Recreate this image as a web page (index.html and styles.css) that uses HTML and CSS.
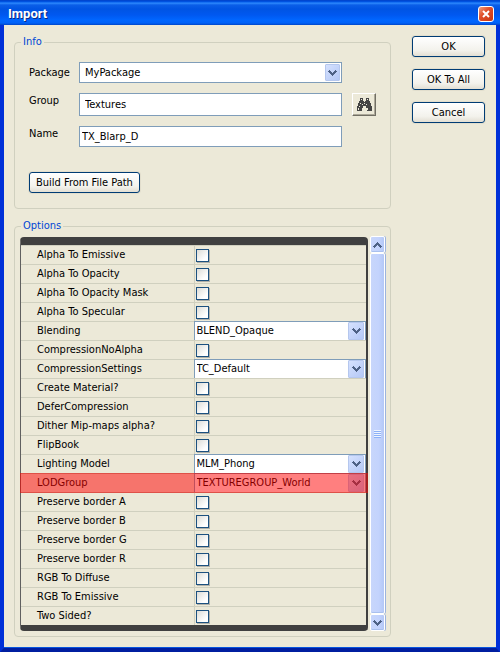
FILE: index.html
```html
<!DOCTYPE html>
<html lang="en">
<head>
<meta charset="utf-8">
<meta name="viewport" content="width=device-width, initial-scale=1">
<title>Import</title>
<link rel="stylesheet" href="styles.css">
</head>
<body>
<svg class="defs" aria-hidden="true">
  <symbol id="chevron" viewBox="0 0 9 6"><path d="M1 0h1v1h1v1h1v1h1v-1h1v-1h1v-1h1v1h1v1h-1v1h-1v1h-1v1h-1v1h-1v-1h-1v-1h-1v-1h-1v-1h-1v-1h1z"/></symbol>
</svg>
<div class="window">
  <header class="titlebar">
    <h1>Import</h1>
    <button class="close" type="button" aria-label="Close">
      <svg viewBox="0 0 8 8" width="8" height="8"><path d="M1 1L7 7M7 1L1 7" stroke="#fff" stroke-width="2"/></svg>
    </button>
  </header>
  <form class="content">
    <main class="panels">
      <fieldset class="info">
        <legend>Info</legend>
        <div class="fields">
          <label for="package">Package</label>
          <div class="combo">
            <select id="package"><option>MyPackage</option></select>
            <span class="arrow"><svg width="9" height="6"><use href="#chevron"/></svg></span>
          </div>
          <label for="group">Group</label>
          <input class="group" id="group" type="text" value="Textures">
          <button class="find" type="button" aria-label="Find">
            <svg viewBox="0 0 15 13" width="15" height="13" shape-rendering="crispEdges">
              <path fill="#444" d="M3 0h3v3h1v1h1v-1h1v-3h3v3h1v2h1v3h1v5h-5v-3h-1v-2h-3v2h-1v3h-5v-5h1v-3h1v-2h1z"/>
              <path fill="#ece9d8" d="M4 1h1v1h-1zM10 1h1v1h-1zM3 5h1v1h-1zM2 8h1v1h-1zM1 10h1v2h-1zM7 5h1v1h-1zM5 6h1v1h-1zM9 6h1v1h-1zM10 10h1v2h-1z"/>
            </svg>
          </button>
          <label for="name">Name</label>
          <input id="name" type="text" value="TX_Blarp_D">
        </div>
        <button class="button build" type="button">Build From File Path</button>
      </fieldset>
      <fieldset class="options">
        <legend>Options</legend>
        <div class="grid-area">
          <div class="property-grid">
            <table>
              <tbody>
                <tr><th><label for="o1">Alpha To Emissive</label></th><td><input id="o1" type="checkbox"></td></tr>
                <tr><th><label for="o2">Alpha To Opacity</label></th><td><input id="o2" type="checkbox"></td></tr>
                <tr><th><label for="o3">Alpha To Opacity Mask</label></th><td><input id="o3" type="checkbox"></td></tr>
                <tr><th><label for="o4">Alpha To Specular</label></th><td><input id="o4" type="checkbox"></td></tr>
                <tr class="choice"><th><label for="o5">Blending</label></th><td><div class="combo"><select id="o5"><option>BLEND_Opaque</option></select><span class="arrow"><svg width="9" height="6"><use href="#chevron"/></svg></span></div></td></tr>
                <tr><th><label for="o6">CompressionNoAlpha</label></th><td><input id="o6" type="checkbox"></td></tr>
                <tr class="choice"><th><label for="o7">CompressionSettings</label></th><td><div class="combo"><select id="o7"><option>TC_Default</option></select><span class="arrow"><svg width="9" height="6"><use href="#chevron"/></svg></span></div></td></tr>
                <tr><th><label for="o8">Create Material?</label></th><td><input id="o8" type="checkbox"></td></tr>
                <tr><th><label for="o9">DeferCompression</label></th><td><input id="o9" type="checkbox"></td></tr>
                <tr><th><label for="o10">Dither Mip-maps alpha?</label></th><td><input id="o10" type="checkbox"></td></tr>
                <tr><th><label for="o11">FlipBook</label></th><td><input id="o11" type="checkbox"></td></tr>
                <tr class="choice"><th><label for="o12">Lighting Model</label></th><td><div class="combo"><select id="o12"><option>MLM_Phong</option></select><span class="arrow"><svg width="9" height="6"><use href="#chevron"/></svg></span></div></td></tr>
                <tr class="choice marked"><th><label for="o13">LODGroup</label></th><td><div class="combo"><select id="o13"><option>TEXTUREGROUP_World</option></select><span class="arrow"><svg width="9" height="6"><use href="#chevron"/></svg></span></div></td></tr>
                <tr><th><label for="o14">Preserve border A</label></th><td><input id="o14" type="checkbox"></td></tr>
                <tr><th><label for="o15">Preserve border B</label></th><td><input id="o15" type="checkbox"></td></tr>
                <tr><th><label for="o16">Preserve border G</label></th><td><input id="o16" type="checkbox"></td></tr>
                <tr><th><label for="o17">Preserve border R</label></th><td><input id="o17" type="checkbox"></td></tr>
                <tr><th><label for="o18">RGB To Diffuse</label></th><td><input id="o18" type="checkbox"></td></tr>
                <tr><th><label for="o19">RGB To Emissive</label></th><td><input id="o19" type="checkbox"></td></tr>
                <tr><th><label for="o20">Two Sided?</label></th><td><input id="o20" type="checkbox"></td></tr>
              </tbody>
            </table>
          </div>
          <div class="scrollbar">
            <button type="button" aria-label="Scroll up"><svg class="up" width="9" height="6"><use href="#chevron"/></svg></button>
            <div class="thumb"><span class="grip"></span></div>
            <button type="button" aria-label="Scroll down"><svg width="9" height="6"><use href="#chevron"/></svg></button>
          </div>
        </div>
      </fieldset>
    </main>
    <div class="actions">
      <button class="button" type="button">OK</button>
      <button class="button" type="button">OK To All</button>
      <button class="button" type="button">Cancel</button>
    </div>
  </form>
</div>
</body>
</html>
```
FILE: styles.css
```css
* { box-sizing: border-box; }

body {
  margin: 0;
  background: #0831d9;
  font-family: Tahoma, "DejaVu Sans Condensed", sans-serif;
  font-size: 11px;
  line-height: 14px;
  color: #000;
}

button, input, select { font: inherit; color: inherit; margin: 0; }
.defs { position: absolute; width: 0; height: 0; }
svg { display: block; fill: #4d6185; }

.window {
  display: flex;
  flex-direction: column;
  min-height: 100vh;
  border: solid;
  border-width: 0 4px 4px;
  border-color: #0a48e6 #0030d8 #001ea0 #0030d8;
  background: #ece9d8;
  box-shadow: inset 0 -1px #0855dd;
}

.titlebar {
  display: flex;
  align-items: center;
  justify-content: space-between;
  height: 25px;
  margin: 0 -4px;
  padding: 3px 6px 0 8px;
  background: linear-gradient(#0040c8 0, #0058e8 2px, #2f8cff 3px, #0a5ee8 5px, #0054e3 9px, #0058f0 15px, #0066ff 20px, #0062f8 23px, #0045c8 25px);
}

.titlebar h1 {
  margin: 0;
  color: #fff;
  font: bold 13px/16px Roboto, sans-serif;
  text-shadow: 1px 1px #0a2a80;
}

.close {
  display: grid;
  place-items: center;
  width: 16px;
  height: 16px;
  padding: 0;
  border: 1px solid #fff;
  border-radius: 3px;
  background: linear-gradient(135deg, #f0a080, #e0502c 40%, #c83410);
}

.content {
  display: flex;
  flex: 1;
  gap: 21px;
  padding: 10px 11px 10px 10px;
}

.panels {
  display: flex;
  flex: 1;
  flex-direction: column;
  gap: 10px;
  min-width: 0;
}

fieldset {
  min-width: 0;
  margin: 0;
  border: 1px solid #d0d0bf;
  border-radius: 4px;
}

legend { padding: 0 2px; color: #0046d5; }
.info legend { margin-left: -8px; }
.options legend { margin-left: 1px; }

.info { padding: 13px 14px 15px; }
.options { padding: 3px 5px 5px; }

.fields {
  display: grid;
  grid-template-columns: 50px 1fr 24px;
  row-gap: 10px;
  padding-bottom: 25px;
}
.fields label { grid-column: 1; padding-top: 1px; }
.fields label[for="package"] { padding-top: 4px; }
.fields .combo, .fields > input { margin-right: 10px; }
.fields > .combo, .fields > #name { grid-column: 2; }

.fields > input {
  min-width: 0;
  height: 21px;
  padding: 0 2px;
  border: 1px solid #7f9db9;
  background: #fff;
}
.fields > .group { height: 23px; padding: 0 5px; }

.combo {
  display: grid;
  grid-template-columns: 1fr 18px;
  min-width: 0;
  height: 21px;
}
.combo select {
  grid-area: 1 / 1 / 2 / 3;
  appearance: none;
  width: 100%;
  height: 100%;
  padding: 0 18px 0 5px;
  border: 1px solid #7f9db9;
  border-radius: 0;
  background: #fff;
}
.combo .arrow {
  grid-area: 1 / 2;
  display: grid;
  place-items: center;
  margin: 2px 2px 2px 1px;
  border: 1px solid #b5c7ee;
  border-radius: 1px;
  background: linear-gradient(135deg, #d5e1fe, #b4c8f6);
  pointer-events: none;
}

.find {
  display: grid;
  place-items: center;
  width: 24px;
  height: 23px;
  padding: 0;
  border: 1px solid;
  border-color: #fff #716f64 #716f64 #fff;
  background: #ece9d8;
  box-shadow: inset -1px -1px #aca899;
}

.button {
  height: 21px;
  padding: 0 6px;
  border: 1px solid #003c74;
  border-radius: 3px;
  background: linear-gradient(#fff, #f3f2ec 70%, #e3dfd3);
  box-shadow: 0 0 0 1px #e2decd;
  white-space: nowrap;
}

.actions {
  display: flex;
  flex-direction: column;
  gap: 12px;
  width: 73px;
  padding-top: 1px;
}

.grid-area { display: flex; gap: 2px; }

.property-grid {
  flex: 1;
  min-width: 0;
  margin-top: 1px;
  border: solid #404040;
  border-width: 8px 2px 6px 1px;
  border-radius: 4px;
  border-left-color: #606060;
}

table { width: 100%; border-spacing: 0; table-layout: fixed; }
tr { position: relative; }
th, td {
  height: 19px;
  padding: 0;
  border-top: 1px solid #d0d0bf;
  text-align: left;
  vertical-align: middle;
  font-weight: normal;
}
th { width: 50%; padding-left: 16px; }
td { border-left: 1px solid #d0d0bf; padding-left: 1px; }
th label { display: block; }

input[type="checkbox"] {
  display: block;
  appearance: none;
  width: 13px;
  height: 13px;
  border: 1px solid #1c5180;
  background: linear-gradient(135deg, #dcdcd7, #fff 75%);
  box-shadow: 1px 1px #b0b0a8;
}

.choice td { padding: 0; border: 0; }
.choice .combo { height: 19px; }
.choice .combo select { padding-left: 2px; border-width: 1px 1px 0; }
.choice .arrow { margin: 1px 2px 0 0; }

.marked th::after {
  content: "";
  position: absolute;
  inset: 0 -2px -1px -1px;
  z-index: 1;
  border: 1px solid rgba(200, 30, 20, .3);
  background: rgba(255, 0, 0, .5);
  pointer-events: none;
}

.scrollbar {
  display: flex;
  flex-direction: column;
  width: 15px;
}
.scrollbar button, .thumb {
  display: grid;
  place-items: center;
  padding: 0;
  border: 1px solid #fff;
  border-radius: 2px;
  background: linear-gradient(90deg, #c8d6fb, #c3d3fd 60%, #b4c8f6);
  box-shadow: 1px 0 #9db4de, inset 0 -1px #a9c0ee;
}
.scrollbar button { height: 17px; }
.thumb { flex: 1; }
.grip {
  width: 7px;
  height: 8px;
  background: repeating-linear-gradient(#eef4fe 0 1px, #8cb0f8 1px 2px);
}
.up { transform: rotate(180deg); }
```
